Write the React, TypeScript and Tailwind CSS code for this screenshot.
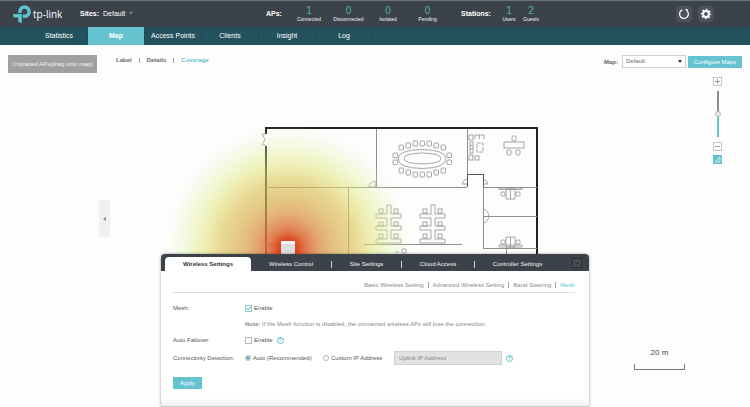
import { useState } from 'react'

type Counter = { label: string; value: number; width: string }

const apCounters: Counter[] = [
  { label: 'Connected', value: 1, width: 'w-10' },
  { label: 'Disconnected', value: 0, width: 'w-[39px]' },
  { label: 'Isolated', value: 0, width: 'w-10' },
  { label: 'Pending', value: 0, width: 'w-[39px]' },
]

const stationCounters: Counter[] = [
  { label: 'Users', value: 1, width: 'w-[22px]' },
  { label: 'Guests', value: 2, width: 'w-[22px]' },
]

const navItems = ['Statistics', 'Map', 'Access Points', 'Clients', 'Insight', 'Log']
const mapViews = ['Label', 'Details', 'Coverage']
const meshLinks = ['Basic Wireless Setting', 'Advanced Wireless Setting', 'Band Steering', 'Mesh']

const panelTabs = [
  { name: 'Wireless Control', width: 'w-20' },
  { name: 'Site Settings', width: 'w-[70px]' },
  { name: 'Cloud Access', width: 'w-[73px]' },
  { name: 'Controller Settings', width: 'w-[86px]' },
]

function Logo() {
  return (
    <div className="flex items-center gap-[2px] text-white">
      <svg viewBox="0 0 18 18" className="h-[18px] w-[18px]" fill="#5cc4d0">
        <path d="M11.500 0.300a6.200 6.200 0 0 1 0 12.800H9.800V9.600h1.700a2.900 2.900 0 1 0-2.900-2.900v1.300H5.200V6.700A6.300 6.300 0 0 1 11.500 0.300Z" />
        <path d="M0 9h8.800v8.700H7.200c-1.300 0-2-.7-2-2v-3.200H2c-1.300 0-2-.7-2-2Z" />
      </svg>
      <span className="font-['Open_Sans',sans-serif] text-[10px] leading-[14px]">tp-link</span>
    </div>
  )
}

function CounterGroup({ items }: { items: Counter[] }) {
  return (
    <div className="flex">
      {items.map((c) => (
        <div key={c.label} className={`flex flex-col items-center ${c.width}`}>
          <span className="text-[10px] leading-[11px] text-[#4fb3ae]">{c.value}</span>
          <span className="text-[5px] leading-[7px] text-gray-100">{c.label}</span>
        </div>
      ))}
    </div>
  )
}

function Header() {
  return (
    <header className="flex h-[27px] border-t border-[#69757a] bg-[#3b424a] pl-[13px] pr-9 text-white">
      <div className="w-[67px] pt-1">
        <Logo />
      </div>
      <div className="flex w-[186px] gap-1 pt-2 text-[7px] leading-[9px]">
        <span className="font-bold">Sites:</span>
        <button className="flex h-[9px] items-center gap-1">
          Default
          <svg viewBox="0 0 4 3" className="h-[3px] w-1" fill="#8b9298"><path d="M0 0h4L2 2Z" /></svg>
        </button>
      </div>
      <div className="flex w-[195px] pt-1">
        <span className="w-[23px] pt-1 text-[7px] font-bold leading-[9px]">APs:</span>
        <CounterGroup items={apCounters} />
      </div>
      <div className="flex pt-1">
        <span className="w-[37px] pt-1 text-[7px] font-bold leading-[9px]">Stations:</span>
        <CounterGroup items={stationCounters} />
      </div>
      <div className="ml-auto flex gap-[6px] pt-[5px]">
        <button aria-label="Refresh" className="flex h-4 w-4 items-center justify-center rounded-sm bg-[#4b525a]">
          <svg viewBox="0 0 12 12" className="h-3 w-3" fill="none" stroke="#fff" strokeWidth="1.3">
            <path d="M4.400 1.900A4.400 4.400 0 1 0 9.600 3.500" />
            <path d="M7 .8l3 .6-.5 3Z" fill="#fff" stroke="none" />
          </svg>
        </button>
        <button aria-label="Settings" className="flex h-4 w-4 items-center justify-center rounded-sm bg-[#4b525a]">
          <svg viewBox="0 0 12 12" className="h-3 w-3" fill="none" stroke="#fff">
            <circle cx="6" cy="6" r="2.900" strokeWidth="2" />
            <circle cx="6" cy="6" r="4.400" strokeWidth="1.500" strokeDasharray="1.730 1.726" strokeDashoffset="0.860" />
          </svg>
        </button>
      </div>
    </header>
  )
}

function NavBar() {
  const [active, setActive] = useState('Map')
  return (
    <nav className="flex h-[18px] bg-[#23525e] pl-[31px]">
      {navItems.map((name) => (
        <button
          key={name}
          onClick={() => setActive(name)}
          className={`w-[57px] border-r border-[#1f4954] text-center text-[7px] leading-[18px] text-white ${active === name ? 'bg-[#64c3cf] font-bold' : ''}`}
        >
          {name}
        </button>
      ))}
    </nav>
  )
}

function Toolbar() {
  const [view, setView] = useState('Coverage')
  return (
    <div className="relative z-10 flex items-start pl-2 pr-2 pt-[10px] text-[6px]">
      <button className="h-[18px] w-[89px] bg-[#a0a0a0] text-gray-100">Unplaced APs(drag onto map)</button>
      <div className="ml-[19px] flex h-[11px] items-center">
        {mapViews.map((name, i) => (
          <div key={name} className="flex items-center">
            {i > 0 && <span className="mx-[7px] h-[5px] w-px bg-gray-400" />}
            <button onClick={() => setView(name)} className={`font-bold ${view === name ? 'text-[#5fc2cf]' : 'text-[#6a6a6a]'}`}>
              {name}
            </button>
          </div>
        ))}
      </div>
      <label htmlFor="map" className="ml-auto mr-1 font-bold leading-[14px] text-[#666]">Map:</label>
      <div className="relative mr-[2px]">
        <select id="map" className="block h-[13px] w-16 appearance-none border border-[#d0d0d0] bg-white pl-[3px] text-[#666]">
          <option>Default</option>
        </select>
        <svg viewBox="0 0 4 3" className="pointer-events-none absolute right-1 top-[5px] h-[3px] w-1" fill="#333"><path d="M0 0h4L2 3Z" /></svg>
      </div>
      <button className="mt-px h-3 w-[54px] bg-[#64c3cf] text-white">Configure Maps</button>
    </div>
  )
}

function ZoomControls() {
  return (
    <div className="absolute right-7 top-8 z-10 flex w-[9px] flex-col items-center">
      <button aria-label="Zoom in" className="flex h-[9px] w-[9px] items-center justify-center border border-[#c4c4c4] bg-white">
        <svg viewBox="0 0 5 5" className="h-[5px] w-[5px]" stroke="#999"><path d="M0 2.500h5M2.500 0v5" /></svg>
      </button>
      <input
        type="range"
        aria-label="Map zoom"
        defaultValue={50}
        className="mb-[5px] mt-[5px] h-[46px] w-[7px] appearance-none bg-[linear-gradient(#8c8c8c_50%,#64c3cf_50%)] bg-[length:2px_100%] bg-center bg-no-repeat [direction:rtl] [writing-mode:vertical-lr] [&::-webkit-slider-thumb]:h-[6px] [&::-webkit-slider-thumb]:w-[6px] [&::-webkit-slider-thumb]:appearance-none [&::-webkit-slider-thumb]:rounded-full [&::-webkit-slider-thumb]:border [&::-webkit-slider-thumb]:border-[#bbb] [&::-webkit-slider-thumb]:bg-[#e8e8e8]"
      />
      <button aria-label="Zoom out" className="flex h-[9px] w-[9px] items-center justify-center border border-[#c4c4c4] bg-white">
        <svg viewBox="0 0 5 5" className="h-[5px] w-[5px]" stroke="#999"><path d="M0 2.500h5" /></svg>
      </button>
      <button aria-label="Set map scale" className="mt-1 h-[9px] w-[9px] bg-[#64c3cf]">
        <svg viewBox="0 0 9 9" className="h-[9px] w-[9px]" fill="none" stroke="#e8fafa" strokeWidth="0.700"><path d="M2 7L7 2v5ZM3.500 5.500l.6.6M5 4l.6.6" /></svg>
      </button>
    </div>
  )
}

const topChairs = [[399, 145], [406, 143], [413, 141], [420, 141], [427, 141], [434, 143], [441, 145]]

// cluster of six desks sharing a central spine
function DeskCluster({ x }: { x: number }) {
  return (
    <g transform={`translate(${x} 205)`}>
      <path d="M11 0h4v9h10v4H15v8h10v4H15v9h10v4H0v-4h11v-9H0v-4h11v-8H0V9h11Z" />
      {[4, 17, 29].map((y) => (
        <g key={y}>
          <rect x="3" y={y} width="4" height="4" />
          <rect x="18" y={y} width="4" height="4" />
        </g>
      ))}
    </g>
  )
}

function FloorPlan() {
  return (
    <svg viewBox="150 45 400 220" className="absolute left-[150px] top-0 h-[220px] w-[400px]" fill="none">
      <defs>
        <radialGradient id="heat" gradientUnits="userSpaceOnUse" cx="288" cy="249" r="124">
          <stop offset="0" stopColor="#dc2a0c" />
          <stop offset="0.08" stopColor="#dc4218" stopOpacity="0.950" />
          <stop offset="0.16" stopColor="#dc6c38" stopOpacity="0.850" />
          <stop offset="0.27" stopColor="#dc9048" stopOpacity="0.750" />
          <stop offset="0.4" stopColor="#dab050" stopOpacity="0.700" />
          <stop offset="0.54" stopColor="#dcc45c" stopOpacity="0.650" />
          <stop offset="0.66" stopColor="#e2e070" stopOpacity="0.550" />
          <stop offset="0.79" stopColor="#e0ee90" stopOpacity="0.380" />
          <stop offset="0.9" stopColor="#def2b0" stopOpacity="0.200" />
          <stop offset="1" stopColor="#e8f8d0" stopOpacity="0" />
        </radialGradient>
      </defs>
      <path d="M266 134V128H537V262M266 146V262" stroke="#222" strokeWidth="2" />
      <path d="M376.500 129V187M266 187.500H467M348.500 187V262M467.500 129V187M467 174.500H483.500V248M483 187.500H537M483 216.500H537M483 248.500H537M506.500 248V262M364 244.500H462M266 244.500H276" stroke="#8f8f8f" />
      <path d="M467 174.500H483.500V187M467.500 174V187" stroke="#555" />
      <g stroke="#8f8f8f" strokeWidth="0.800">
        <path d="M266 134h-4l3 5.500-3 5.500h4M376 187h-7q0-5 6-6v6M467 184h-5q1-4 5-5M483 184h5q-1-4-5-5M483 209q5 1 6 7q-1 6-6 7" />
        <path d="M398 159q0-9 24-9.500q24 .5 24 9.500q0 9-24 9.500q-24-.5-24-9.500Z" />
        <path d="M404 158.500q0-5 18.500-5.500q18.500.5 18.500 5.500q0 5-18.500 5.500q-18.500-.5-18.500-5.500Z" />
        {topChairs.map(([x, y]) => <rect key={x} x={x} y={y} width="4.500" height="5" rx="1" />)}
        {topChairs.map(([x, y]) => <rect key={x} x={x} y={313 - y} width="4.500" height="5" rx="1" />)}
        <rect x="393" y="153" width="4.500" height="4.500" rx="1" />
        <rect x="393" y="160" width="4.500" height="4.500" rx="1" />
        <rect x="447" y="153" width="4.500" height="4.500" rx="1" />
        <rect x="447" y="160" width="4.500" height="4.500" rx="1" />
        <DeskCluster x={376} />
        <DeskCluster x={420} />
        {/* lounge */}
        <rect x="469" y="135" width="4" height="5" />
        <path d="M475 139v-4h9v4M479.500 135v4" />
        <rect x="470" y="142" width="3" height="11" />
        <path d="M470 145.500h3M470 149h3" />
        <rect x="477" y="143" width="6" height="9" strokeDasharray="4 1" />
        <rect x="469" y="155" width="4" height="5" />
        <rect x="475" y="156" width="4" height="4" />
        {/* manager desk */}
        <rect x="504" y="142" width="20" height="6" />
        <rect x="512" y="136" width="4" height="5" rx="1" />
        <rect x="507" y="150" width="4" height="5" rx="1" />
        <rect x="516" y="150" width="4" height="5" rx="1" />
        {[188, 236].map((y) => (
          <g key={y}>
            <path d={`M506 ${y + 1}h9v10h-9ZM510.500 ${y + 1}v10`} />
            <rect x="501" y={y + 4} width="4" height="4" rx="1" />
            <rect x="516" y={y + 4} width="4" height="4" rx="1" />
          </g>
        ))}
        <path d="M499 188h23v1.500h-23ZM499 245h23v2h-23Z" />
        <path d="M402 249h4v4h-4ZM395 252h4" />
      </g>
      <circle cx="288" cy="249" r="124" fill="url(#heat)" />
      <rect x="281" y="241" width="14" height="20" rx="3" fill="#dcdce2" />
      <rect x="281" y="241" width="14" height="3" rx="1" fill="#f6f6f8" />
    </svg>
  )
}

function HelpIcon() {
  return (
    <button aria-label="Help" className="ml-1 flex h-[7px] w-[7px] items-center justify-center rounded-full border border-[#5fc2cf] text-[5px] font-bold leading-[5px] text-[#5fc2cf]">?</button>
  )
}

function Radio({ label, checked, onChange }: { label: string; checked: boolean; onChange: () => void }) {
  return (
    <label className="flex items-center gap-[2px]">
      <input
        type="radio"
        name="detection"
        checked={checked}
        onChange={onChange}
        className="h-[6px] w-[6px] appearance-none rounded-full border border-[#b8b8b8] bg-white checked:bg-[radial-gradient(#3fa9b5_40%,#fff_75%)]"
      />
      {label}
    </label>
  )
}

function SettingsPanel() {
  const [mesh, setMesh] = useState(true)
  const [failover, setFailover] = useState(false)
  const [auto, setAuto] = useState(true)

  return (
    <div className="pointer-events-none absolute inset-x-0 bottom-0 z-20 flex justify-center">
      <section className="pointer-events-auto w-[428px] rounded-t-sm bg-white text-[6px] leading-[8px] text-[#555] shadow-[0_0_3px_rgba(0,0,0,0.4)]">
        <div className="flex h-[17px] items-end rounded-t-sm bg-[#3b424a] pl-1">
          <button className="h-[14px] w-[86px] rounded-t-sm bg-white font-bold text-[#333]">Wireless Settings</button>
          {panelTabs.map((tab, i) => (
            <div key={tab.name} className={`flex h-[14px] items-center ${tab.width}`}>
              {i > 0 && <span className="h-[7px] w-px bg-gray-300" />}
              <button className="flex-1 text-center text-gray-100">{tab.name}</button>
            </div>
          ))}
          <button aria-label="Collapse" className="mb-[3px] ml-auto mr-[7px] flex h-[10px] w-[10px] items-center justify-center border border-[#2a3036] bg-[#4a4c4e]">
            <svg viewBox="0 0 6 4" className="h-1 w-[6px]" fill="none" stroke="#2a2a2a"><path d="M1 1l2 2 2-2" /></svg>
          </button>
        </div>

        <div className="bg-linear-to-t from-[#f0f0f0] to-white to-[8px] pb-[17px] pl-3 pr-[14px]">
          <div className="flex h-[22px] items-center justify-end border-b border-[#ddd] pt-[7px] text-[#888]">
            {meshLinks.map((name, i) => (
              <div key={name} className="flex items-center">
                {i > 0 && <span className="mx-1 h-[6px] w-px bg-gray-400" />}
                <a href="#" className={name === 'Mesh' ? 'text-[#5fc2cf]' : ''}>{name}</a>
              </div>
            ))}
          </div>

          <div className="mt-[11px] flex h-2 items-center">
            <span className="w-[72px]">Mesh:</span>
            <label className="flex items-center gap-[2px]">
              <span className="relative flex">
                <input
                  type="checkbox"
                  checked={mesh}
                  onChange={() => setMesh(!mesh)}
                  className="h-[7px] w-[7px] appearance-none border border-[#8ecfc4] bg-white"
                />
                {mesh && (
                  <svg viewBox="0 0 7 7" className="pointer-events-none absolute h-[7px] w-[7px]" fill="none" stroke="#4ab8a8"><path d="M1.500 3.500L3 5l3-3.500" /></svg>
                )}
              </span>
              Enable
            </label>
          </div>
          <p className="ml-[72px] mt-2 text-[#888]"><b>Note:</b> If the Mesh function is disabled, the connected wireless APs will lose the connection.</p>
          <div className="mt-2 flex h-2 items-center">
            <span className="w-[72px]">Auto Failover:</span>
            <label className="flex items-center gap-[2px]">
              <input
                type="checkbox"
                checked={failover}
                onChange={() => setFailover(!failover)}
                className="h-[7px] w-[7px] appearance-none border border-[#b8b8b8] bg-white checked:bg-[#64c3cf]"
              />
              Enable
            </label>
            <HelpIcon />
          </div>
          <div className="mt-[7px] flex h-[14px] items-center">
            <span className="w-[72px]">Connectivity Detection:</span>
            <div className="w-[78px]"><Radio label="Auto (Recommended)" checked={auto} onChange={() => setAuto(true)} /></div>
            <div className="w-[71px]"><Radio label="Custom IP Address" checked={!auto} onChange={() => setAuto(false)} /></div>
            <input
              aria-label="Uplink IP Address"
              placeholder="Uplink IP Address"
              disabled={auto}
              className="h-[14px] w-[108px] border border-[#d0d0d0] bg-[#e2e2e2] px-1 placeholder:text-[#888]"
            />
            <HelpIcon />
          </div>
          <button className="mt-3 h-3 w-[29px] bg-[#64c3cf] text-white">Apply</button>
        </div>
        <div className="h-px bg-[#ccc]" />
      </section>
    </div>
  )
}

export default function App() {
  return (
    <div className="flex min-h-screen flex-col bg-[#fdfdfd] font-['Liberation_Sans',Arial,sans-serif]">
      <Header />
      <NavBar />
      <main className="relative flex-1 overflow-hidden">
        <FloorPlan />
        <Toolbar />
        <ZoomControls />
        <button aria-label="Collapse side list" className="absolute left-[99px] top-[155px] flex h-[37px] w-[11px] items-center justify-center bg-[#f0f0f0]">
          <svg viewBox="0 0 3 4" className="h-1 w-[3px]" fill="#888"><path d="M3 0v4L0 2Z" /></svg>
        </button>
        {/* distance scale */}
        <div className="absolute bottom-[37px] right-[65px] w-[51px]">
          <p className="text-center text-[8px] leading-[10px] text-[#444]">20 m</p>
          <div className="mt-[6px] h-[6px] border-x border-b border-[#777]" />
        </div>
        <SettingsPanel />
      </main>
    </div>
  )
}
